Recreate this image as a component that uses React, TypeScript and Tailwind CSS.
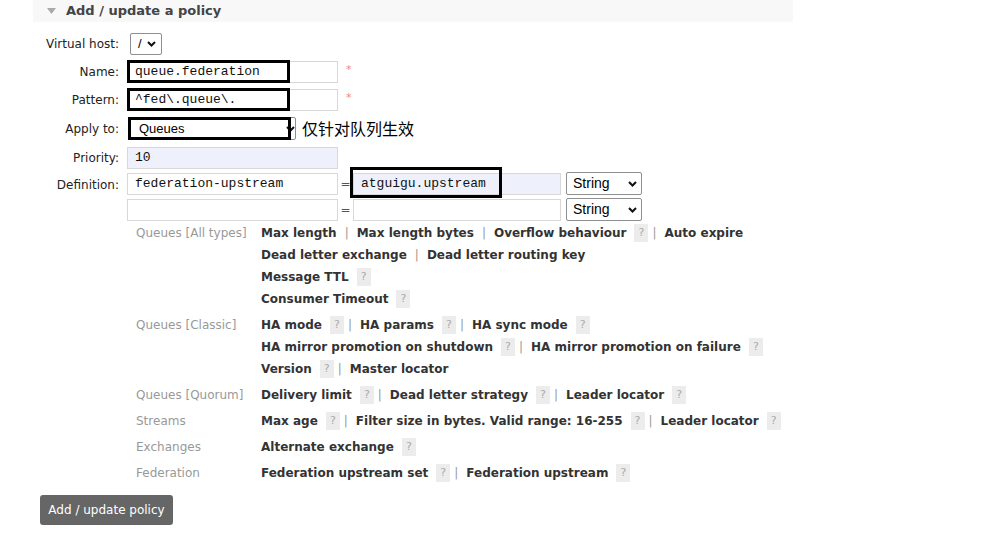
import React from "react";

const FONT = { fontFamily: "'DejaVu Sans', Verdana, sans-serif" };
const MONO = { fontFamily: "'Liberation Mono', 'Courier New', monospace" };
const ARIAL = { fontFamily: "'Liberation Sans', Arial, sans-serif" };

type Item = { text: string; help?: boolean };

const helpGroups: { label: string; lines: Item[][] }[] = [
  {
    label: "Queues [All types]",
    lines: [
      [
        { text: "Max length" },
        { text: "Max length bytes" },
        { text: "Overflow behaviour", help: true },
        { text: "Auto expire" },
      ],
      [{ text: "Dead letter exchange" }, { text: "Dead letter routing key" }],
      [{ text: "Message TTL", help: true }],
      [{ text: "Consumer Timeout", help: true }],
    ],
  },
  {
    label: "Queues [Classic]",
    lines: [
      [
        { text: "HA mode", help: true },
        { text: "HA params", help: true },
        { text: "HA sync mode", help: true },
      ],
      [
        { text: "HA mirror promotion on shutdown", help: true },
        { text: "HA mirror promotion on failure", help: true },
      ],
      [{ text: "Version", help: true }, { text: "Master locator" }],
    ],
  },
  {
    label: "Queues [Quorum]",
    lines: [
      [
        { text: "Delivery limit", help: true },
        { text: "Dead letter strategy", help: true },
        { text: "Leader locator", help: true },
      ],
    ],
  },
  {
    label: "Streams",
    lines: [
      [
        { text: "Max age", help: true },
        { text: "Filter size in bytes. Valid range: 16-255", help: true },
        { text: "Leader locator", help: true },
      ],
    ],
  },
  { label: "Exchanges", lines: [[{ text: "Alternate exchange", help: true }]] },
  {
    label: "Federation",
    lines: [
      [
        { text: "Federation upstream set", help: true },
        { text: "Federation upstream", help: true },
      ],
    ],
  },
];

function Chevron({ className = "" }: { className?: string }) {
  return (
    <svg width="9" height="6" viewBox="0 0 9 6" className={className}>
      <path d="M1 1l3.5 3.5L8 1" fill="none" stroke="#111" strokeWidth="2" />
    </svg>
  );
}

function HelpBadge() {
  return (
    <span className="inline-flex items-center justify-center w-[14px] h-[18px] bg-[#ececec] text-[#aaa] text-[11px] font-normal ml-[8px]">
      ?
    </span>
  );
}

function StringSelect() {
  return (
    <div
      className="relative w-[76px] h-[23px] border border-[#8f8f8f] rounded-[2px] bg-white flex items-center pl-[6px] text-[14px] text-black"
      style={ARIAL}
    >
      String
      <Chevron className="absolute right-[4px] top-[8px]" />
    </div>
  );
}

function TextInput({
  value,
  className = "",
  blue = false,
}: {
  value?: string;
  className?: string;
  blue?: boolean;
}) {
  return (
    <div
      className={`h-[22px] border border-[#d8d8d8] flex items-center pl-[7px] text-[13px] text-[#111] ${
        blue ? "bg-[#eef1fb]" : "bg-white"
      } ${className}`}
      style={MONO}
    >
      {value}
    </div>
  );
}

function Row({
  label,
  children,
  className = "",
}: {
  label: string;
  children: React.ReactNode;
  className?: string;
}) {
  return (
    <div className={`flex items-center ${className}`}>
      <div className="w-[87px] text-right text-[12px] text-[#222] pr-[1px]">{label}</div>
      <div className="ml-[7px] flex items-center">{children}</div>
    </div>
  );
}

export default function App() {
  return (
    <div className="w-[1002px] h-[540px] bg-white overflow-hidden" style={FONT}>
      <div className="ml-[33px] w-[760px] h-[22px] bg-[#f8f8f8] flex items-center">
        <svg width="9" height="6" viewBox="0 0 9 6" className="ml-[14px]">
          <path d="M0 0h9L4.5 6z" fill="#aaa" />
        </svg>
        <span className="ml-[10px] text-[13px] font-bold text-[#444]">Add / update a policy</span>
      </div>

      <div className="ml-[33px]">
        <Row label="Virtual host:" className="mt-[11px] h-[22px]">
          <div className="w-[32px] h-[22px] border border-[#8f8f8f] rounded-[2px] flex items-center pl-[7px] gap-[5px] text-[13px] ml-[3px]" style={ARIAL}>
            /
            <Chevron />
          </div>
        </Row>

        <Row label="Name:" className="mt-[6px] h-[22px]">
          <div className="relative">
            <TextInput value="queue.federation" className="w-[211px]" />
            <div className="absolute left-0 top-[-1px] w-[163px] h-[23px] border-[3px] border-black" />
          </div>
          <span className="ml-[8px] text-[11px] text-[#e88] self-start mt-[1px]">*</span>
        </Row>

        <Row label="Pattern:" className="mt-[6px] h-[22px]">
          <div className="relative">
            <TextInput value="^fed\.queue\." className="w-[211px]" />
            <div className="absolute left-0 top-[-1px] w-[163px] h-[23px] border-[3px] border-black" />
          </div>
          <span className="ml-[8px] text-[11px] text-[#e88] self-start mt-[1px]">*</span>
        </Row>

        <Row label="Apply to:" className="mt-[6px] h-[23px]">
          <div className="relative ml-[1px]">
            <div className="w-[168px] h-[23px] border border-[#8f8f8f] rounded-[2px] bg-white flex items-center pl-[10px] text-[13px] text-black" style={ARIAL}>
              Queues
            </div>
            <Chevron className="absolute left-[158px] top-[9px]" />
            <div className="absolute left-0 top-0 w-[163px] h-[23px] border-[3px] border-black" />
          </div>
          <span
            className="ml-[6px] text-[16px] text-black -mt-[2px]"
            style={{ fontFamily: "'Noto Sans CJK SC', sans-serif" }}
          >
            仅针对队列生效
          </span>
        </Row>

        <Row label="Priority:" className="mt-[7px] h-[22px]">
          <TextInput value="10" blue className="w-[211px]" />
        </Row>

        <div className="flex mt-[3px]">
          <div className="w-[87px] text-right text-[12px] text-[#222] h-[22px] flex items-center justify-end pr-[1px] mt-[2px]">
            Definition:
          </div>
          <div className="ml-[7px] flex flex-col gap-[3px]">
            <div className="flex items-center">
              <TextInput value="federation-upstream" className="w-[211px]" />
              <span className="w-[15px] text-center text-[12px] text-[#555]">=</span>
              <div className="relative">
                <TextInput value="atguigu.upstream" blue className="w-[208px]" />
                <div className="absolute left-[-3px] top-[-6px] w-[152px] h-[31px] border-[3px] border-black" />
              </div>
              <div className="ml-[5px]">
                <StringSelect />
              </div>
            </div>
            <div className="flex items-center">
              <TextInput className="w-[211px]" />
              <span className="w-[15px] text-center text-[12px] text-[#555]">=</span>
              <TextInput className="w-[208px]" />
              <div className="ml-[5px]">
                <StringSelect />
              </div>
            </div>
          </div>
        </div>

        <div className="mt-[1px] ml-[103px] flex flex-col gap-[4px]">
          {helpGroups.map((g) => (
            <div key={g.label} className="flex">
              <div className="w-[125px] text-[12px] text-[#999] leading-[22px]">{g.label}</div>
              <div className="flex flex-col">
                {g.lines.map((line, i) => (
                  <div key={i} className="flex items-center h-[22px] text-[12px] font-bold text-[#333]">
                    {line.map((it, j) => (
                      <React.Fragment key={j}>
                        {j > 0 && (
                          <span
                            className={`mr-[8px] font-normal text-[#999] ${
                              line[j - 1].help ? "ml-[4px]" : "ml-[8px]"
                            }`}
                          >
                            |
                          </span>
                        )}
                        <span>{it.text}</span>
                        {it.help && <HelpBadge />}
                      </React.Fragment>
                    ))}
                  </div>
                ))}
              </div>
            </div>
          ))}
        </div>

        <button className="mt-[11px] ml-[7px] w-[133px] h-[30px] bg-[#666] rounded-[3px] text-white text-[12px]" style={FONT}>
          Add / update policy
        </button>
      </div>
    </div>
  );
}
